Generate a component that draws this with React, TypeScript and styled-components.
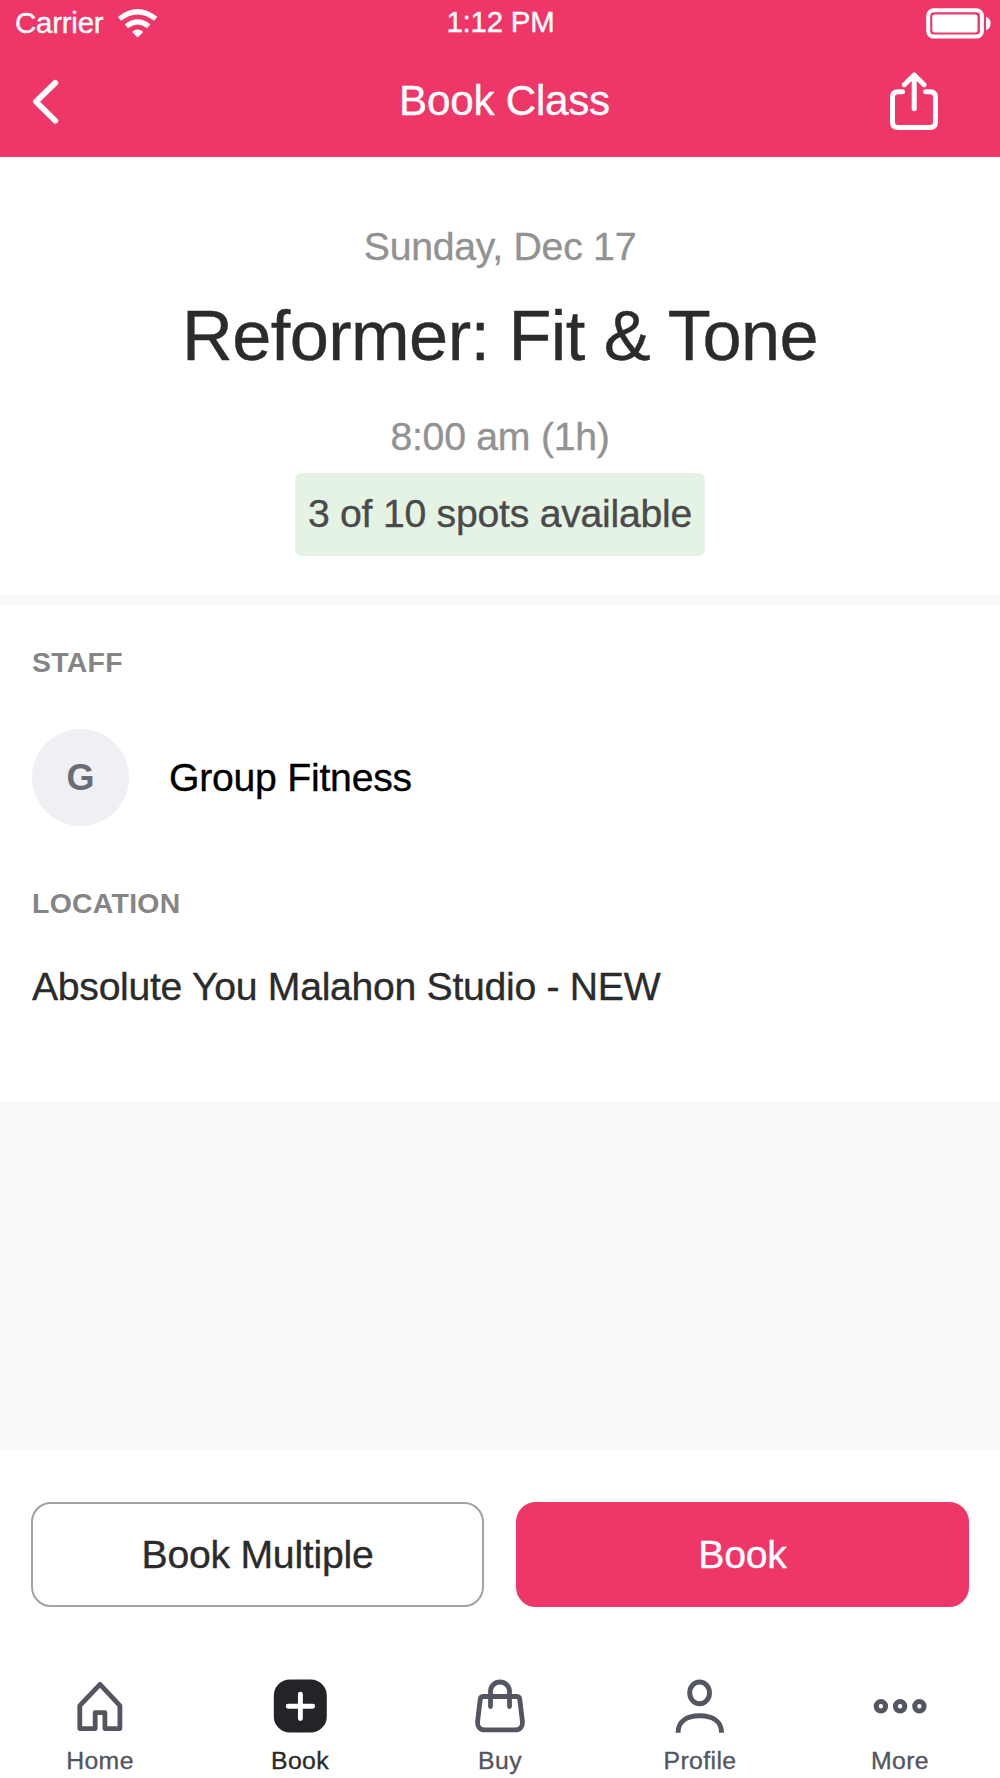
import React from 'react';
import styled, { createGlobalStyle } from 'styled-components';

const PINK = '#ee3768';
const SLATE = '#535660';
const INK = '#2b2b2b';

const GlobalStyle = createGlobalStyle`
  *, *::before, *::after { box-sizing: border-box; }
  body {
    margin: 0;
    background: #fff;
    font-family: "Liberation Sans", Arial, Helvetica, sans-serif;
    -webkit-text-stroke: 0.35px currentColor;
  }
  button { font-family: inherit; cursor: pointer; }
  svg { display: block; }
`;

const Screen = styled.div`
  display: flex;
  flex-direction: column;
  width: 1000px;
  height: 1778px;
  overflow: hidden;
  background: #f8f9fb;
`;

const Header = styled.header`
  flex: none;
  height: 157px;
  background: ${PINK};
  color: #fff;
`;

const StatusBar = styled.div`
  display: grid;
  grid-template-columns: 1fr auto 1fr;
  height: 46px;
  padding: 0 8px 0 15px;
  font-size: 29.4px;
  letter-spacing: -0.2px;
  line-height: 46px;
`;

const Carrier = styled.div`
  display: flex;
  gap: 15px;
`;

const Clock = styled.time`
  line-height: 43px;
  padding-right: 6px;
`;

const BatterySlot = styled.div`
  justify-self: end;
`;

const NavBar = styled.nav`
  display: grid;
  grid-template-columns: 100px 1fr 100px;
  height: 109px;
`;

const IconButton = styled.button`
  padding: 0;
  border: 0;
  background: none;
  color: inherit;
`;

const NavTitle = styled.h1`
  margin: 0;
  padding-left: 9px;
  font-size: 42.2px;
  font-weight: 400;
  letter-spacing: -0.25px;
  line-height: 110px;
  text-align: center;
`;

const Summary = styled.section`
  display: flex;
  flex: none;
  flex-direction: column;
  align-items: center;
  height: 438px;
  padding-top: 60px;
  background: #fff;
`;

const Muted = styled.p`
  margin: 0;
  color: #929292;
  font-size: 39.2px;
  letter-spacing: -0.25px;
  line-height: 60px;
`;

const ClassName = styled.h2`
  margin: 9px 0 21px;
  color: ${INK};
  font-size: 70.4px;
  font-weight: 400;
  letter-spacing: -0.6px;
  line-height: 100px;
`;

const Spots = styled.p`
  margin: 6px 0 0;
  width: 410px;
  height: 83px;
  border-radius: 7px;
  background: #e4f3e4;
  color: #4a4a4a;
  font-size: 39.2px;
  letter-spacing: -0.25px;
  line-height: 81px;
  text-align: center;
`;

const Details = styled.section`
  flex: none;
  height: 496px;
  margin-top: 10px;
  padding: 37px 32px 0;
  background: #fff;
`;

const SectionLabel = styled.h3`
  margin: 0;
  color: #858585;
  font-size: 28.4px;
  font-weight: 700;
  letter-spacing: 0.3px;
  line-height: 40px;
  -webkit-text-stroke: 0;
`;

const StaffRow = styled.div`
  display: flex;
  align-items: center;
  gap: 40px;
  margin: 47px 0 57px;
`;

const Avatar = styled.div`
  width: 97px;
  height: 97px;
  border-radius: 50%;
  background: #eff0f3;
  color: #6a6c77;
  font-size: 36px;
  font-weight: 700;
  line-height: 98px;
  text-align: center;
  -webkit-text-stroke: 0;
`;

const StaffName = styled.div`
  color: #000;
  font-size: 39.2px;
  letter-spacing: -0.25px;
  line-height: 97px;
`;

const LocationName = styled.p`
  margin: 34px 0 0;
  color: ${INK};
  font-size: 39.2px;
  letter-spacing: -0.3px;
  line-height: 60px;
`;

const Actions = styled.div`
  display: flex;
  flex: none;
  gap: 32px;
  height: 202px;
  margin-top: auto;
  padding: 53px 31px 0;
  background: #fff;
`;

const ActionButton = styled.button<{ $primary?: boolean }>`
  flex: 1;
  height: 105px;
  padding: 0;
  border: 2px solid ${(p) => (p.$primary ? PINK : '#a2a2a2')};
  border-radius: 20px;
  background: ${(p) => (p.$primary ? PINK : '#fff')};
  color: ${(p) => (p.$primary ? '#fff' : INK)};
  font-size: 39.2px;
  letter-spacing: -0.25px;
  line-height: 100px;
`;

const TabBar = styled.nav`
  display: grid;
  flex: none;
  grid-template-columns: repeat(5, 1fr);
  height: 127px;
  padding-top: 28px;
  background: #fff;
`;

const Tab = styled.div<{ $active?: boolean }>`
  display: flex;
  flex-direction: column;
  align-items: center;
  color: ${(p) => (p.$active ? '#2a2a2c' : SLATE)};
`;

const TabLabel = styled.span`
  margin-top: 8px;
  font-size: 24.8px;
  letter-spacing: 0.4px;
  line-height: 40px;
`;

const WifiIcon = () => (
  <svg width="40" height="46" viewBox="119 0 40 46" fill="none" stroke="#fff">
    <path d="M120.5 18.800Q138.600 4.600 156.700 18.800" strokeWidth="5.200" />
    <path d="M127.400 26.300Q138.600 17.600 149.800 26.300" strokeWidth="5.200" />
    <path d="M133 32Q138.600 27.200 144.200 32L138.600 37.400Z" fill="#fff" stroke="none" />
  </svg>
);

const BatteryIcon = () => (
  <svg width="66" height="46" viewBox="926 0 66 46" fill="none">
    <rect x="928.2" y="10.200" width="53.700" height="26.400" rx="5.500" stroke="#fff" strokeWidth="4" />
    <rect x="932.3" y="14.500" width="45.200" height="17.900" rx="1.800" fill="#fff" />
    <path d="M986 16.800Q990.600 18.300 990.600 23.500T986 30.200Z" fill="#fff" />
  </svg>
);

const BackIcon = () => (
  <svg width="100" height="109" viewBox="0 46 100 109" fill="none">
    <path d="M55.300 81.900L36 100.700L55.300 119.700" stroke="#fff" strokeWidth="5.800" strokeLinecap="round" strokeLinejoin="round" />
  </svg>
);

const ShareIcon = () => (
  <svg width="100" height="109" viewBox="900 46 100 109" overflow="visible" fill="none" stroke="#fff" strokeWidth="5" strokeLinecap="round" strokeLinejoin="round">
    <path d="M902.500 90.700H898Q892.500 90.700 892.500 96.200V121Q892.500 126.500 898 126.500H930Q935.500 126.500 935.500 121V96.200Q935.500 90.700 930 90.700H925.700" />
    <path d="M914.200 107.700V74M904.300 83.700L914.200 74L924.100 83.700" />
  </svg>
);

const HomeIcon = () => (
  <svg width="54" height="54" viewBox="73 1679 54 54" fill="none" stroke="currentColor" strokeWidth="4.800" strokeLinejoin="round">
    <path d="M100 1684.400L79.800 1705.700V1728.600H95.200V1712.700H104.900V1728.600H119.900V1705.700Z" />
  </svg>
);

const BookIcon = () => (
  <svg width="54" height="54" viewBox="273 1679 54 54" fill="none">
    <rect x="273.800" y="1679.500" width="53" height="53" rx="16" fill="#222428" />
    <path d="M300.400 1694.300V1718.600M288.200 1706.300H312.700" stroke="#fff" strokeWidth="4.900" strokeLinecap="round" />
  </svg>
);

const BuyIcon = () => (
  <svg width="54" height="54" viewBox="473 1679 54 54" fill="none" stroke="currentColor" strokeWidth="4.800" strokeLinecap="round" strokeLinejoin="round">
    <path d="M483.500 1696.500H516.500Q519.400 1696.500 519.800 1699.400L522.400 1721.500Q523 1729.900 514.500 1729.900H485.500Q477 1729.900 477.600 1721.500L480.200 1699.400Q480.600 1696.500 483.500 1696.500Z" />
    <path d="M490.500 1706.600V1691.500A9.500 9.500 0 0 1 509.500 1691.500V1706.600" />
  </svg>
);

const ProfileIcon = () => (
  <svg width="54" height="54" viewBox="673 1679 54 54" fill="none" stroke="currentColor" strokeWidth="4.900">
    <ellipse cx="699.600" cy="1692.900" rx="9.900" ry="10.900" />
    <path d="M678 1732.800C678 1721 687 1715.800 699.700 1715.800S721.600 1721 721.600 1732.800" />
  </svg>
);

const MoreIcon = () => (
  <svg width="54" height="54" viewBox="873 1679 54 54" fill="none" stroke="currentColor" strokeWidth="5">
    <circle cx="880.900" cy="1706.300" r="4.700" />
    <circle cx="900.100" cy="1706.300" r="4.700" />
    <circle cx="919.400" cy="1706.300" r="4.700" />
  </svg>
);

const tabs = [
  { label: 'Home', Icon: HomeIcon },
  { label: 'Book', Icon: BookIcon, active: true },
  { label: 'Buy', Icon: BuyIcon },
  { label: 'Profile', Icon: ProfileIcon },
  { label: 'More', Icon: MoreIcon },
];

export default function App() {
  return (
    <>
      <GlobalStyle />
      <Screen>
        <Header>
          <StatusBar>
            <Carrier>
              <span>Carrier</span>
              <WifiIcon />
            </Carrier>
            <Clock>1:12 PM</Clock>
            <BatterySlot>
              <BatteryIcon />
            </BatterySlot>
          </StatusBar>
          <NavBar>
            <IconButton aria-label="Back">
              <BackIcon />
            </IconButton>
            <NavTitle>Book Class</NavTitle>
            <IconButton aria-label="Share">
              <ShareIcon />
            </IconButton>
          </NavBar>
        </Header>
        <Summary>
          <Muted>Sunday, Dec 17</Muted>
          <ClassName>Reformer: Fit &amp; Tone</ClassName>
          <Muted>8:00 am (1h)</Muted>
          <Spots>3 of 10 spots available</Spots>
        </Summary>
        <Details>
          <SectionLabel>STAFF</SectionLabel>
          <StaffRow>
            <Avatar>G</Avatar>
            <StaffName>Group Fitness</StaffName>
          </StaffRow>
          <SectionLabel>LOCATION</SectionLabel>
          <LocationName>Absolute You Malahon Studio - NEW</LocationName>
        </Details>
        <Actions>
          <ActionButton>Book Multiple</ActionButton>
          <ActionButton $primary>Book</ActionButton>
        </Actions>
        <TabBar>
          {tabs.map(({ label, Icon, active }) => (
            <Tab key={label} $active={active}>
              <Icon />
              <TabLabel>{label}</TabLabel>
            </Tab>
          ))}
        </TabBar>
      </Screen>
    </>
  );
}
